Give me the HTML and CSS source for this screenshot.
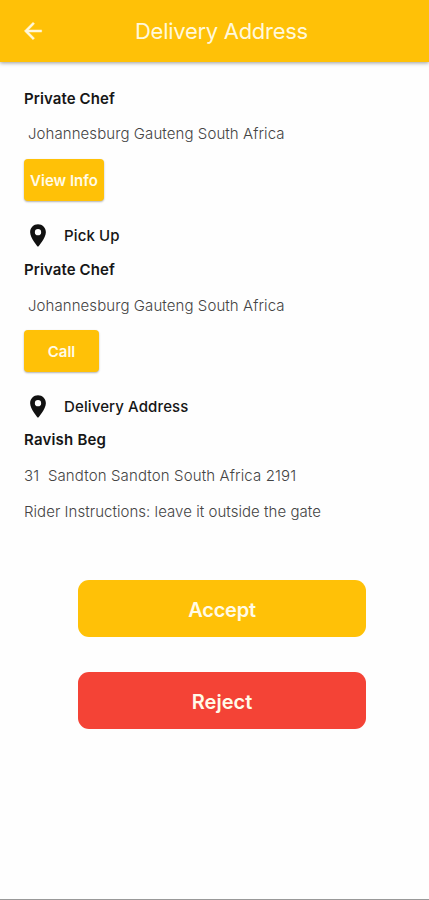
FILE: index.html
```html
<!DOCTYPE html>
<html lang="en">
<head>
<meta charset="utf-8">
<meta name="viewport" content="width=device-width, initial-scale=1">
<title>Delivery Address</title>
<link rel="stylesheet" href="styles.css">
</head>
<body>
<header class="app-bar">
  <svg class="back" viewBox="0 0 24 24" aria-label="Back"><path d="M20 11H7.83l5.59-5.59L12 4l-8 8 8 8 1.41-1.41L7.83 13H20z"/></svg>
  <h1 class="title"><span>Delivery Address</span></h1>
</header>
<main class="content">
  <section class="block restaurant">
    <h2 class="name chef">Private Chef</h2>
    <p class="line indent"><span>Johannesburg Gauteng South Africa</span></p>
    <button class="small-button view"><span>View Info</span></button>
  </section>
  <section class="block pickup">
    <div class="place">
      <svg class="pin" viewBox="0 0 24 24"><path d="M12 2C8.130 2 5 5.130 5 9c0 5.250 7 13 7 13s7-7.750 7-13c0-3.870-3.130-7-7-7zm0 9.800a2.800 2.800 0 1 1 0-5.600 2.800 2.800 0 0 1 0 5.600z"/></svg>
      <span class="pick">Pick Up</span>
    </div>
    <h2 class="name chef">Private Chef</h2>
    <p class="line indent"><span>Johannesburg Gauteng South Africa</span></p>
    <button class="small-button call"><span>Call</span></button>
  </section>
  <section class="block delivery">
    <div class="place">
      <svg class="pin" viewBox="0 0 24 24"><path d="M12 2C8.130 2 5 5.130 5 9c0 5.250 7 13 7 13s7-7.750 7-13c0-3.870-3.130-7-7-7zm0 9.800a2.800 2.800 0 1 1 0-5.600 2.800 2.800 0 0 1 0 5.600z"/></svg>
      <span class="drop">Delivery Address</span>
    </div>
    <h2 class="name customer">Ravish Beg</h2>
    <p class="line street"><span>31&nbsp; Sandton Sandton South Africa 2191</span></p>
    <p class="line note"><span>Rider Instructions: leave it outside the gate</span></p>
  </section>
  <div class="actions">
    <button class="action accept">Accept</button>
    <button class="action reject">Reject</button>
  </div>
</main>
</body>
</html>
```

FILE: styles.css
```css
* { box-sizing: border-box; }
body {
  margin: 0;
  height: 900px;
  display: flex;
  flex-direction: column;
  background: #fefefe;
  border-bottom: 1px solid #999;
  font-family: Inter, "Liberation Sans", sans-serif;
  color: #161616;
}
h1, h2, p { margin: 0; }
button { border: 0; padding: 0; font-family: inherit; color: #fffbe8; }
.app-bar {
  display: flex;
  align-items: center;
  height: 62px;
  flex: none;
  padding-left: 20px;
  background: #ffc107;
  box-shadow: 0 1px 4px rgba(0, 0, 0, .4);
}
.back { width: 26px; height: 26px; fill: #fff8dc; stroke: #fff8dc; stroke-width: .4; }
.title {
  margin-left: 89px;
  font-size: 22px;
  font-weight: 400;
  letter-spacing: -.28px;
  color: #fff8dc;
}
.content { padding: 19px 24px 0; }
.name {
  height: 34px;
  line-height: 33px;
  font-size: 15px;
  font-weight: 600;
  letter-spacing: .1px;
}
.line {
  height: 36px;
  line-height: 35px;
  font-size: 15px;
  font-weight: 300;
  letter-spacing: .08px;
  color: #444;
  white-space: nowrap;
}
.indent { padding-left: 4px; }
.restaurant .name { height: 35px; line-height: 35px; }
.pickup .line { line-height: 37px; }
.delivery .name { line-height: 31px; }
.customer { letter-spacing: .2px; }
.street { letter-spacing: .12px; }
.note { letter-spacing: .04px; }
.small-button {
  display: block;
  height: 42px;
  margin: 7px 0 17px;
  border-radius: 4px;
  background: #ffc107;
  box-shadow: 0 1px 2px rgba(0, 0, 0, .3);
  font-size: 15px;
  font-weight: 600;
}
.view { width: 80px; }
.call { width: 75px; padding-top: 1px; }
.place {
  display: flex;
  align-items: center;
  height: 35px;
  font-size: 15px;
  font-weight: 500;
  letter-spacing: .12px;
}
.pin { width: 28px; height: 27px; margin-right: 12px; fill: #111; }
.actions {
  display: flex;
  flex-direction: column;
  gap: 35px;
  width: 288px;
  margin: 50px 0 0 54px;
}
.action { height: 57px; border-radius: 11px; padding-top: 2px; font-size: 20px; font-weight: 600; letter-spacing: -.25px; }
.accept { background: #ffc107; }
.reject { background: #f44336; letter-spacing: 0; }
```
